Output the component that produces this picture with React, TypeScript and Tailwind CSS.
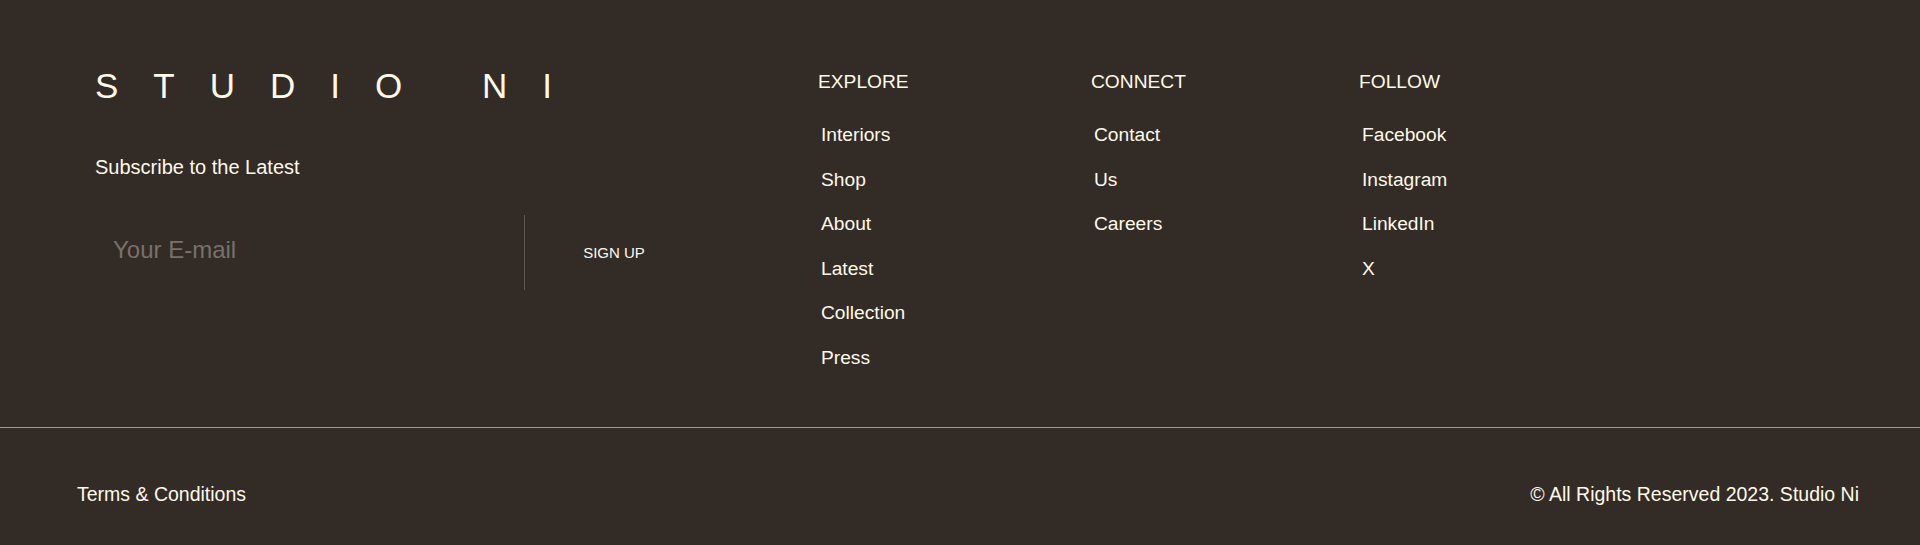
const EXPLORE = ["Interiors", "Shop", "About", "Latest", "Collection", "Press"];
const CONNECT = ["Contact", "Us", "Careers"];
const FOLLOW = ["Facebook", "Instagram", "LinkedIn", "X"];

function LinkColumn({ title, links, width }: { title: string; links: string[]; width: string }) {
  return (
    <div className={`${width} shrink-0`}>
      <h4 className="mt-[1px] text-[19.2px] leading-[22px] font-normal text-[#fdf9ea]">{title}</h4>
      <ul className="mt-[31px] flex flex-col gap-[22.6px] pl-[3px]">
        {links.map((l) => (
          <li key={l} className="text-[19.2px] leading-[22px]">
            <a href="#" className="text-[#fdf9ea]">
              {l}
            </a>
          </li>
        ))}
      </ul>
    </div>
  );
}

export default function App() {
  return (
    <footer
      className="w-full h-[545px] bg-[#332b26] text-[#fdf9ea] overflow-hidden"
      style={{ fontFamily: '"Liberation Sans", Arial, sans-serif' }}
    >
      <div className="h-[427px] flex pt-[70px] pl-[95px]">
        <div className="w-[723px] shrink-0">
          <div className="-mt-[4px] text-[35px] leading-[40px] tracking-[1em] whitespace-nowrap">
            STUDIO NI
          </div>
          <p className="mt-[49px] text-[20px] leading-[24px]">Subscribe to the Latest</p>
          <form className="mt-[36px] flex h-[75px] w-[608px]" onSubmit={(e) => e.preventDefault()}>
            <div className="w-[430px] border-r border-[#5b5753] flex items-center pb-[6px]">
              <input
                type="email"
                placeholder="Your E-mail"
                className="w-full bg-transparent pl-[18px] text-[24px] leading-[28px] text-[#fdf9ea] placeholder:text-[#77716b] outline-none"
              />
            </div>
            <button type="submit" className="flex-1 flex items-center justify-center text-[15px] leading-[18px] text-[#fdf9ea]">
              SIGN UP
            </button>
          </form>
        </div>
        <LinkColumn title="EXPLORE" links={EXPLORE} width="w-[273px]" />
        <LinkColumn title="CONNECT" links={CONNECT} width="w-[268px]" />
        <LinkColumn title="FOLLOW" links={FOLLOW} width="w-[200px]" />
      </div>
      <div className="border-t border-[#9d9792] flex justify-between pl-[77px] pr-[61px] pt-[55px]">
        <a href="#" className="text-[19.5px] leading-[22px]">Terms &amp; Conditions</a>
        <span className="text-[19.5px] leading-[22px]">© All Rights Reserved 2023. Studio Ni</span>
      </div>
    </footer>
  );
}
